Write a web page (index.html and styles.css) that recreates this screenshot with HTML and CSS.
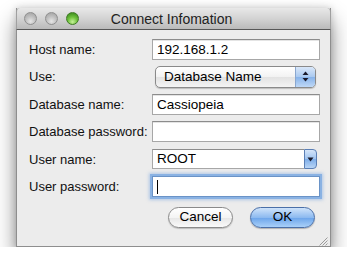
FILE: index.html
```html
<!DOCTYPE html>
<html lang="en">
<head>
  <meta charset="UTF-8">
  <title>Connect Infomation</title>
  <link rel="stylesheet" href="styles.css">
</head>
<body>
  <div class="window">
    <div class="titlebar">
      <div class="lights">
        <span class="light"></span>
        <span class="light"></span>
        <span class="light light-zoom"></span>
      </div>
      <div class="window-title">Connect Infomation</div>
    </div>

    <div class="content">
      <form class="connect-form">
        <label class="field-label">Host name:</label>
        <div class="text-field">192.168.1.2</div>

        <label class="field-label">Use:</label>
        <div class="popup">
          <span class="popup-text">Database Name</span>
          <span class="popup-stepper">
            <svg width="7" height="11" viewBox="0 0 7 11">
              <path d="M3.5 0.5 L6.5 4 L0.5 4 Z" fill="#1a1a2a"/>
              <path d="M3.5 10.5 L6.5 7 L0.5 7 Z" fill="#1a1a2a"/>
            </svg>
          </span>
        </div>

        <label class="field-label">Database name:</label>
        <div class="text-field">Cassiopeia</div>

        <label class="field-label">Database password:</label>
        <div class="text-field"></div>

        <label class="field-label">User name:</label>
        <div class="combo">
          <span class="combo-text">ROOT</span>
          <span class="combo-button">
            <svg width="7" height="5" viewBox="0 0 7 5">
              <path d="M0.5 0.5 L6.5 0.5 L3.5 4.5 Z" fill="#1a1a2a"/>
            </svg>
          </span>
        </div>

        <label class="field-label">User password:</label>
        <div class="text-field focused"><span class="caret"></span></div>
      </form>

      <div class="buttons">
        <button class="btn btn-cancel" type="button">Cancel</button>
        <button class="btn btn-ok" type="button">OK</button>
      </div>

      <div class="grip">
        <svg width="10" height="10" viewBox="0 0 10 10">
          <path d="M9.5 1.5 L1.5 9.5 M9.5 4.5 L4.5 9.5 M9.5 7.5 L7.5 9.5" stroke="#9a9a9a" stroke-width="1"/>
        </svg>
      </div>
    </div>
  </div>
</body>
</html>
```

FILE: styles.css
```css
* {
  box-sizing: border-box;
  margin: 0;
  padding: 0;
}

body {
  background: #ffffff;
  font-family: 'Lucida Grande', 'Liberation Sans', 'DejaVu Sans', sans-serif;
  font-size: 13px;
  color: #000000;
}

.window {
  width: 315px;
  height: 239px;
  margin: 8px 0 0 16px;
  background: #ececec;
  border: 1px solid #8e8e8e;
  border-top: none;
  box-shadow: 0 12px 20px rgba(0, 0, 0, 0.45), 0 0 7px rgba(0, 0, 0, 0.18);
  display: flex;
  flex-direction: column;
}

.titlebar {
  height: 22px;
  position: relative;
  background: linear-gradient(#e8e8e8 0%, #d3d3d3 50%, #bababa 100%);
  border-bottom: 1px solid #575757;
  border-radius: 4px 4px 0 0;
  margin: 0 -1px;
  border-left: 1px solid #a0a0a0;
  border-right: 1px solid #a0a0a0;
  display: flex;
  align-items: center;
}

.lights {
  display: flex;
  gap: 8px;
  padding-left: 7px;
}

.light {
  width: 13px;
  height: 13px;
  border-radius: 50%;
  background: radial-gradient(circle at 50% 75%, #e6e6e6 0%, #c2c2c2 45%, #9e9e9e 100%);
  border: 1px solid #8f8f8f;
}

.light-zoom {
  background: radial-gradient(circle at 50% 80%, #c6f19a 0%, #6fc23c 45%, #2f7e16 100%);
  border-color: #3f7a25;
}

.window-title {
  position: absolute;
  left: 0;
  right: 0;
  top: 3px;
  text-align: center;
  font-size: 14px;
  color: #222222;
  padding-right: 4px;
}

.content {
  flex: 1;
  position: relative;
  padding: 9px 10px 0 12px;
}

.connect-form {
  display: grid;
  grid-template-columns: 123px 168px;
  grid-auto-rows: 21px;
  row-gap: 6.4px;
  align-items: center;
}

.field-label {
  font-size: 13px;
  color: #111111;
}

.text-field {
  height: 21px;
  background: #ffffff;
  border: 1px solid #a7a7a7;
  border-top-color: #8c8c8c;
  box-shadow: inset 0 1px 0 #e4e4e4;
  padding: 2px 4px 0;
  font-size: 13.5px;
  line-height: 16px;
}

.text-field.focused {
  border-color: #6a93c7;
  box-shadow: 0 0 0 2px #8ab2e3, 0 0 3px 3px rgba(120, 165, 225, 0.5);
}

.caret {
  display: inline-block;
  width: 1px;
  height: 14px;
  margin-top: 1px;
  background: #000000;
}

.popup {
  height: 22px;
  margin: 0 4px 0 3px;
  display: flex;
  border: 1px solid #8a8a8a;
  border-radius: 5px;
  background: linear-gradient(#ffffff 0%, #f2f2f2 50%, #e2e2e2 51%, #f4f4f4 100%);
  box-shadow: 0 1px 1px rgba(0, 0, 0, 0.2);
  overflow: hidden;
}

.popup-text {
  flex: 1;
  padding: 2px 0 0 8px;
  font-size: 13.5px;
}

.popup-stepper {
  width: 20px;
  display: flex;
  align-items: center;
  justify-content: center;
  border-left: 1px solid #8aa7cf;
  background: linear-gradient(#d9e7f9 0%, #a9c9f0 50%, #87b3ea 51%, #bfd8f6 100%);
}

.combo {
  height: 20px;
  margin-right: 3px;
  display: flex;
}

.combo-text {
  flex: 1;
  background: #ffffff;
  border: 1px solid #a7a7a7;
  border-top-color: #8c8c8c;
  border-right: none;
  padding: 1px 4px 0;
  font-size: 13.5px;
}

.combo-button {
  width: 13px;
  display: flex;
  align-items: center;
  justify-content: center;
  border: 1px solid #5b7fb5;
  border-radius: 0 4px 4px 0;
  background: linear-gradient(#d5e5f9 0%, #9fc3ef 50%, #7eaee9 51%, #b9d5f6 100%);
}

.buttons {
  display: flex;
  justify-content: flex-end;
  gap: 17px;
  margin-top: 10px;
  padding-right: 5px;
}

.btn {
  width: 65px;
  height: 21px;
  border-radius: 11px;
  font-family: inherit;
  font-size: 13.5px;
  color: #000000;
  line-height: 18px;
}

.btn-cancel {
  border: 1px solid #8a8a8a;
  background: linear-gradient(#ffffff 0%, #f4f4f4 50%, #e6e6e6 51%, #fafafa 100%);
  box-shadow: 0 1px 1px rgba(0, 0, 0, 0.2);
}

.btn-ok {
  border: 1px solid #4a6fa8;
  background: linear-gradient(#cfe3fa 0%, #8dbaf0 50%, #6ba4ea 51%, #a9d0f8 100%);
  box-shadow: 0 1px 1px rgba(0, 0, 0, 0.25);
}

.grip {
  position: absolute;
  right: 2px;
  bottom: 2px;
  width: 10px;
  height: 10px;
}
```
